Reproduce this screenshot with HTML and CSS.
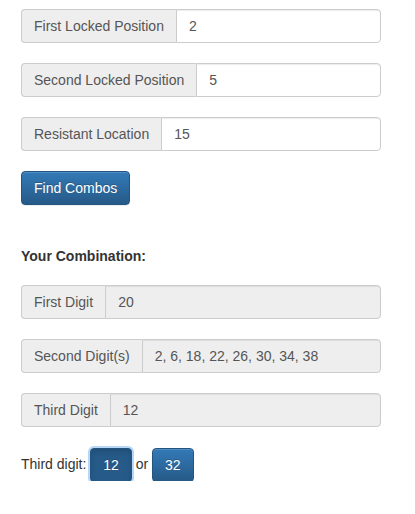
FILE: index.html
```html
<!DOCTYPE html>
<html lang="en">
<head>
  <meta charset="UTF-8">
  <title>Combo Finder</title>
  <link rel="stylesheet" href="styles.css">
</head>
<body>
<div class="container">
  <form class="finder">
    <div class="input-group">
      <span class="input-group-addon">First Locked Position</span>
      <input class="form-control" type="text" value="2">
    </div>
    <div class="input-group">
      <span class="input-group-addon">Second Locked Position</span>
      <input class="form-control" type="text" value="5">
    </div>
    <div class="input-group">
      <span class="input-group-addon">Resistant Location</span>
      <input class="form-control" type="text" value="15">
    </div>
    <button type="button" class="btn btn-primary">Find Combos</button>
  </form>

  <h5 class="result-title">Your Combination:</h5>

  <div class="input-group">
    <span class="input-group-addon">First Digit</span>
    <input class="form-control" type="text" value="20" readonly>
  </div>
  <div class="input-group">
    <span class="input-group-addon">Second Digit(s)</span>
    <input class="form-control" type="text" value="2, 6, 18, 22, 26, 30, 34, 38" readonly>
  </div>
  <div class="input-group">
    <span class="input-group-addon">Third Digit</span>
    <input class="form-control" type="text" value="12" readonly>
  </div>

  <div class="third-choice">
    Third digit: <button type="button" class="btn btn-primary active-choice">12</button> or <button type="button" class="btn btn-primary">32</button>
  </div>
</div>
</body>
</html>
```

FILE: styles.css
```css
* {
  box-sizing: border-box;
}

body {
  margin: 0;
  padding: 9px 34px 0 21px;
  font-family: 'Liberation Sans', Arial, sans-serif;
  font-size: 14px;
  line-height: 20px;
  color: #333;
  background: #fff;
}

.input-group {
  display: flex;
  height: 34px;
  margin-bottom: 20px;
}

.input-group-addon {
  padding: 6px 12px;
  font-size: 14px;
  line-height: 20px;
  color: #555;
  white-space: nowrap;
  background: #eee;
  border: 1px solid #ccc;
  border-right: 0;
  border-radius: 4px 0 0 4px;
}

.form-control {
  flex: 1;
  min-width: 0;
  height: 34px;
  padding: 6px 12px;
  font-family: inherit;
  font-size: 14px;
  line-height: 20px;
  color: #555;
  background: #fff;
  border: 1px solid #ccc;
  border-radius: 0 4px 4px 0;
  box-shadow: inset 0 1px 1px rgba(0, 0, 0, 0.075);
  outline: none;
}

.form-control[readonly] {
  background: #eee;
}

.btn {
  display: inline-block;
  height: 34px;
  padding: 6px 12px;
  font-family: inherit;
  font-size: 14px;
  line-height: 20px;
  border: 1px solid transparent;
  border-radius: 4px;
  vertical-align: middle;
  cursor: pointer;
}

.btn-primary {
  color: #fff;
  text-shadow: 0 -1px 0 rgba(0, 0, 0, 0.2);
  background-image: linear-gradient(to bottom, #337ab7 0, #265a88 100%);
  border-color: #245580;
  box-shadow: inset 0 1px 0 rgba(255, 255, 255, 0.15), 0 1px 1px rgba(0, 0, 0, 0.075);
}

.btn-primary:hover {
  background-image: none;
  background-color: #265a88;
}

.active-choice {
  background-image: none;
  background-color: #265a88;
  box-shadow: 0 0 0 2px #b8d6f5, inset 0 3px 5px rgba(0, 0, 0, 0.125);
}

.result-title {
  margin: 41px 0 19px;
  font-size: 14px;
  line-height: 20px;
  font-weight: bold;
}

.third-choice {
  height: 34px;
  line-height: 34px;
  color: #333;
}
```
